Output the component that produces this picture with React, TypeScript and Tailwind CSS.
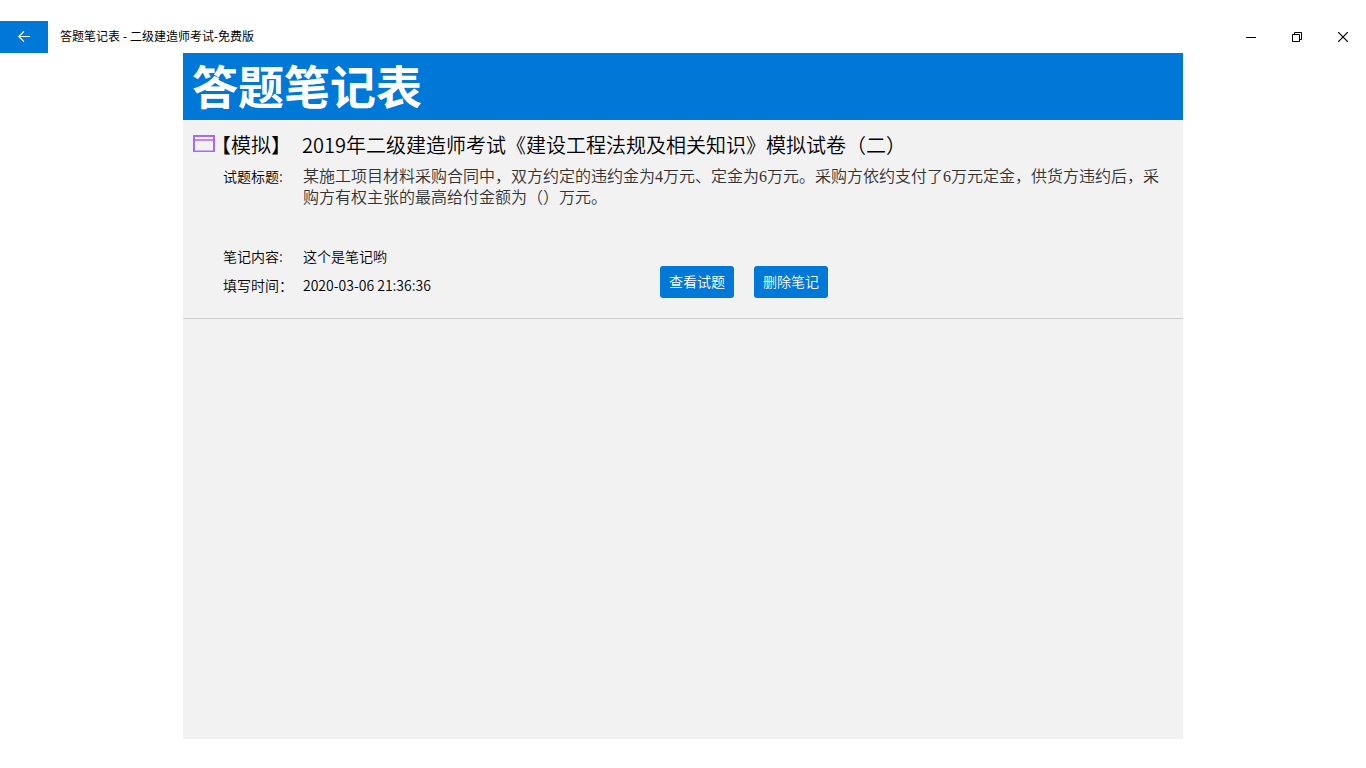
interface Note {
    id: number;
    category: string;
    paper: string;
    question: string;
    content: string;
    createdAt: string;
}

const notes: Note[] = [
    {
        id: 1,
        category: '【模拟】',
        paper: '2019年二级建造师考试《建设工程法规及相关知识》模拟试卷（二）',
        question:
            '某施工项目材料采购合同中，双方约定的违约金为4万元、定金为6万元。采购方依约支付了6万元定金，供货方违约后，采购方有权主张的最高给付金额为（）万元。',
        content: '这个是笔记哟',
        createdAt: '2020-03-06 21:36:36',
    },
];

function TitleBar() {
    return (
        <header className="flex h-8 items-center">
            <button type="button" aria-label="返回" className="flex h-8 w-12 items-center justify-center bg-[#0078d7] text-white">
                <svg width="12" height="12" viewBox="0 0 12 12" fill="none" stroke="currentColor" strokeWidth="1.2">
                    <path d="M12 5.5H0.8M6 0.3L0.8 5.5L6 10.7" />
                </svg>
            </button>
            <span className="flex-1 pl-3 font-[Open_Sans,Noto_Sans_CJK_SC,sans-serif] text-xs leading-4 font-normal">
                答题笔记表 - 二级建造师考试-免费版
            </span>
            <button type="button" aria-label="最小化" className="flex h-8 w-[46px] items-center justify-center">
                <svg width="10" height="10" viewBox="0 0 10 10" fill="none" stroke="currentColor">
                    <path d="M0 5.5H10" />
                </svg>
            </button>
            <button type="button" aria-label="还原" className="flex h-8 w-[46px] items-center justify-center">
                <svg width="10" height="10" viewBox="0 0 10 10" fill="none" stroke="currentColor">
                    <path d="M0.5 2.5H7.5V9.5H0.5ZM2.5 2.5V0.5H9.5V7.5H7.5" />
                </svg>
            </button>
            <button type="button" aria-label="关闭" className="flex h-8 w-[46px] items-center justify-center">
                <svg width="10" height="10" viewBox="0 0 10 10" fill="none" stroke="currentColor" strokeWidth="1.2">
                    <path d="M0 0L10 10M10 0L0 10" />
                </svg>
            </button>
        </header>
    );
}

function PaperIcon() {
    return (
        <svg width="22" height="20" viewBox="0 0 22 20" fill="none" stroke="#a966ff" className="shrink-0">
            <path d="M1 0V17M21 0V17M0 1H22" strokeWidth="2" />
            <path d="M0 16.25H22M1 5H21" strokeWidth="1.5" />
        </svg>
    );
}

function NoteCard({ note }: { note: Note }) {
    return (
        <article className="border-b border-[#cccccc] px-[10px] pt-3 pb-5">
            <h2 className="flex items-center text-xl leading-[26px] font-[350]">
                <span className="w-[18px]">
                    <PaperIcon />
                </span>
                <span className="w-[91px] shrink-0">{note.category}</span>
                <span>{note.paper}</span>
            </h2>

            <div className="mt-2 flex min-h-20 pl-[30px] text-sm leading-[21px]">
                <span className="w-20 shrink-0">试题标题:</span>
                <p className="font-[Liberation_Serif,Noto_Sans_CJK_SC,serif] text-base leading-[21px] text-[#333333]">
                    {note.question}
                </p>
            </div>

            <div className="grid grid-cols-[437px_1fr] pl-[30px] text-sm leading-[21px]">
                <dl className="grid grid-cols-[80px_1fr] content-start gap-y-2">
                    <dt>笔记内容:</dt>
                    <dd>{note.content}</dd>
                    <dt>填写时间：</dt>
                    <dd>{note.createdAt}</dd>
                </dl>
                <div className="mt-5 flex gap-5 text-white">
                    <button type="button" className="h-8 w-[74px] rounded-[3px] bg-[#0078d7] pb-[2px]">
                        查看试题
                    </button>
                    <button type="button" className="h-8 w-[74px] rounded-[3px] bg-[#0078d7] pb-[2px]">
                        删除笔记
                    </button>
                </div>
            </div>
        </article>
    );
}

export default function App() {
    return (
        <div
            lang="zh-CN"
            className="flex min-h-screen flex-col bg-white pt-[21px] pb-[29px] font-[Noto_Sans_CJK_SC,sans-serif] font-[350] text-black"
        >
            <TitleBar />
            <main className="mx-auto w-full max-w-[1000px] flex-1 bg-[#f2f2f2]">
                <h1 className="bg-[#0078d7] px-[9px] pb-1 text-[46px] leading-[63px] font-bold text-white">答题笔记表</h1>
                {notes.map((note) => (
                    <NoteCard key={note.id} note={note} />
                ))}
            </main>
        </div>
    );
}
